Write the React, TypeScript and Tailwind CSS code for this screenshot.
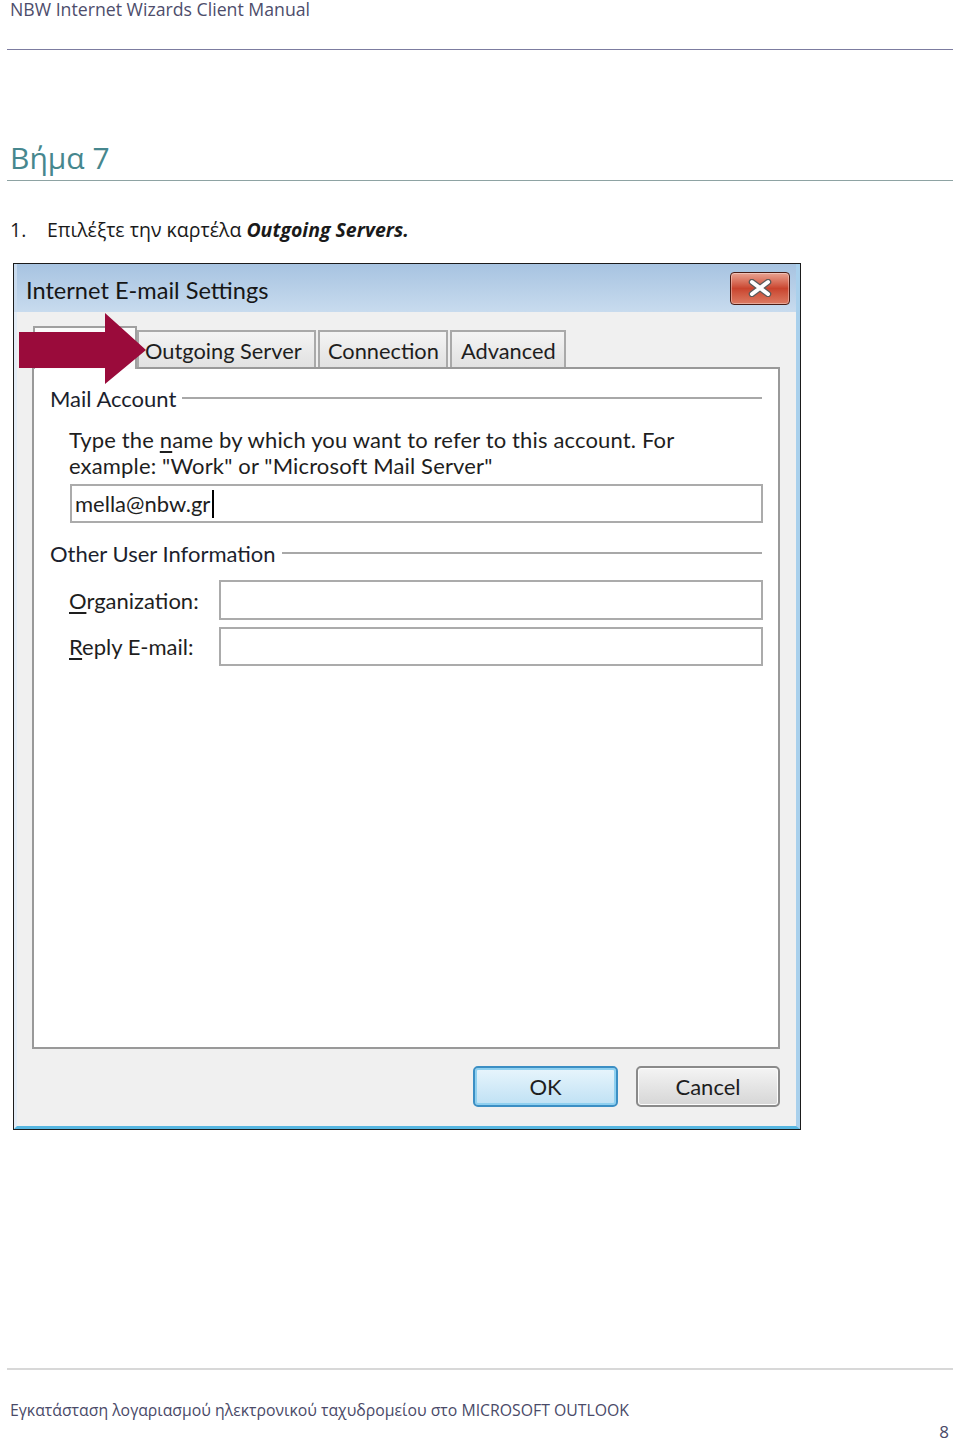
import React from "react";

function Field({ children, className = "" }: { children?: React.ReactNode; className?: string }) {
  return (
    <div className={`border-[2px] border-[#ababab] bg-white flex items-center ${className}`}>{children}</div>
  );
}

function GroupHeader({ label }: { label: string }) {
  return (
    <div className="flex items-center h-[28px]">
      <span className="text-[#1c1f2e]">{label}</span>
      <div className="flex-1 h-[2px] bg-[#a8a8a8] ml-[6px] mr-[1px]" />
    </div>
  );
}

export default function App() {
  return (
    <div className="w-[960px] h-[1444px] bg-white relative overflow-hidden flex flex-col font-['Open_Sans',sans-serif]">
      {/* Running header */}
      <div className="pl-[10px] text-[17.7px] leading-[18px] text-[#4d4d6b]">NBW Internet Wizards Client Manual</div>
      <div className="mt-[31px] mx-[7px] h-px bg-[#7c7ca0]" />

      {/* Heading */}
      <h1 className="mt-[88px] pl-[10px] text-[30px] leading-[40px] font-normal text-[#46878e]">Βήμα 7</h1>
      <div className="mt-[2px] mx-[7px] h-px bg-[#8ea3a3]" />

      {/* Instruction */}
      <div className="mt-[37px] pl-[10px] flex text-[19.5px] leading-[24px] text-[#1a1a1a]">
        <span className="w-[37px]">1.</span>
        <span>
          Επιλέξτε την καρτέλα <b className="italic font-bold">Outgoing Servers.</b>
        </span>
      </div>

      {/* Dialog screenshot */}
      <div className="mt-[21px] ml-[13px] w-[788px] h-[867px] relative border border-[#1b1b1b] bg-[#f0f0f0] flex flex-col font-['Lato',sans-serif] text-[22px] text-[#1e1e1e]">
        {/* title bar */}
        <div className="h-[48px] shrink-0 flex items-center justify-between pl-[9px] pr-[6px] bg-linear-to-b from-[#a7c3e1] to-[#c8dbee] border-l-[3px] border-l-[#c9dbee] border-r-[4px] border-r-[#a9d0ec]">
          <span className="text-[23.6px] text-[#161616] pt-[5px]">Internet E-mail Settings</span>
          <div className="w-[60px] h-[33px] rounded-[4px] border border-[#4a1c14] bg-linear-to-b from-[#e9a392] via-[#c9442e] to-[#dc7a62] flex items-center justify-center shadow-[inset_0_0_0_1px_rgba(255,255,255,0.35)]">
            <svg width="26" height="18" viewBox="0 0 26 18">
              <path d="M5 3 L21 15 M21 3 L5 15" stroke="#5a5a5a" strokeWidth="6.5" strokeLinecap="round" />
              <path d="M5 3 L21 15 M21 3 L5 15" stroke="#ffffff" strokeWidth="4" strokeLinecap="round" />
            </svg>
          </div>
        </div>

        {/* body */}
        <div className="flex-1 flex flex-col pl-[15px] pt-[14px] border-l-[3px] border-l-[#e3ecf6] border-r-[4px] border-r-[#a9d0ec] border-b-[3px] border-b-[#56b6e0]">
          {/* tabs */}
          <div className="flex items-end h-[41px] ml-[1px] relative z-10 text-[21.8px]">
            <div className="w-[104px] h-[43px] -mb-[2px] bg-[#fbfbfb] border-[2px] border-b-0 border-[#a0a0a0] flex items-center pl-[14px]">
              General
            </div>
            <div className="w-[179px] h-[37px] bg-linear-to-b from-[#f4f4f4] to-[#e1e1e1] border-[2px] border-b-0 border-[#a9a9a9] flex items-center pl-[6px] pt-[3px] mr-[2px]">
              Outgoing Server
            </div>
            <div className="w-[130px] h-[37px] bg-linear-to-b from-[#f4f4f4] to-[#e1e1e1] border-[2px] border-b-0 border-[#a9a9a9] flex items-center pl-[8px] pt-[3px] mr-[2px]">
              Connection
            </div>
            <div className="w-[116px] h-[37px] bg-linear-to-b from-[#f4f4f4] to-[#e1e1e1] border-[2px] border-b-0 border-[#a9a9a9] flex items-center pl-[9px] pt-[3px]">
              Advanced
            </div>
          </div>

          {/* panel */}
          <div className="w-[748px] h-[682px] bg-white border-[2px] border-[#999999] pl-[16px] pr-[15px] pt-[15px] flex flex-col">
            <GroupHeader label="Mail Account" />
            <div className="ml-[19px] mt-[15px] leading-[26px] tracking-[0.15px]">
              Type the <span className="underline underline-offset-[3px]">n</span>ame by which you want to refer to this account. For
              <br />
              example: "Work" or "Microsoft Mail Server"
            </div>
            <Field className="ml-[20px] mt-[5px] h-[39px] pl-[3px]">
              <span>mella@nbw.gr</span>
              <span className="w-[2px] h-[28px] bg-black ml-[2px]" />
            </Field>

            <div className="mt-[16px]">
              <GroupHeader label="Other User Information" />
            </div>
            <div className="mt-[13px] flex items-center">
              <span className="ml-[19px] w-[150px]">
                <span className="underline underline-offset-[3px]">O</span>rganization:
              </span>
              <Field className="flex-1 h-[40px]" />
            </div>
            <div className="mt-[7px] flex items-center">
              <span className="ml-[19px] w-[150px]">
                <span className="underline underline-offset-[3px]">R</span>eply E-mail:
              </span>
              <Field className="flex-1 h-[39px]" />
            </div>
          </div>

          {/* buttons */}
          <div className="mt-[17px] flex justify-end gap-[18px] w-[748px]">
            <div className="w-[145px] h-[41px] rounded-[5px] border-[2px] border-[#3c8fc4] bg-linear-to-b from-[#e8f5fc] to-[#bfe1f4] shadow-[inset_0_0_0_2px_#8fd0f0] flex items-center justify-center">
              OK
            </div>
            <div className="w-[144px] h-[41px] rounded-[5px] border-[2px] border-[#8a8a8a] bg-linear-to-b from-[#f4f4f4] to-[#d6d6d6] shadow-[inset_0_0_0_1px_#fcfcfc] flex items-center justify-center">
              Cancel
            </div>
          </div>
        </div>

        {/* red arrow overlay */}
        <svg className="absolute left-[5px] top-[49px] z-20" width="128" height="72" viewBox="0 0 128 72">
          <polygon points="0,19 86,19 86,0 127,37 86,71 86,55 0,55" fill="#9a0b3b" />
        </svg>
      </div>

      {/* Footer */}
      <div className="mt-[238px] mx-[7px] h-[2px] bg-[#d8d8d8]" />
      <div className="mt-[30px] pl-[10px] text-[15.8px] leading-[20px] text-[#4a4a68]">
        Εγκατάσταση λογαριασμού ηλεκτρονικού ταχυδρομείου στο MICROSOFT OUTLOOK
      </div>
      <div className="mt-[2px] pr-[11px] text-right text-[17px] leading-[20px] text-[#4a4a68]">8</div>
    </div>
  );
}
